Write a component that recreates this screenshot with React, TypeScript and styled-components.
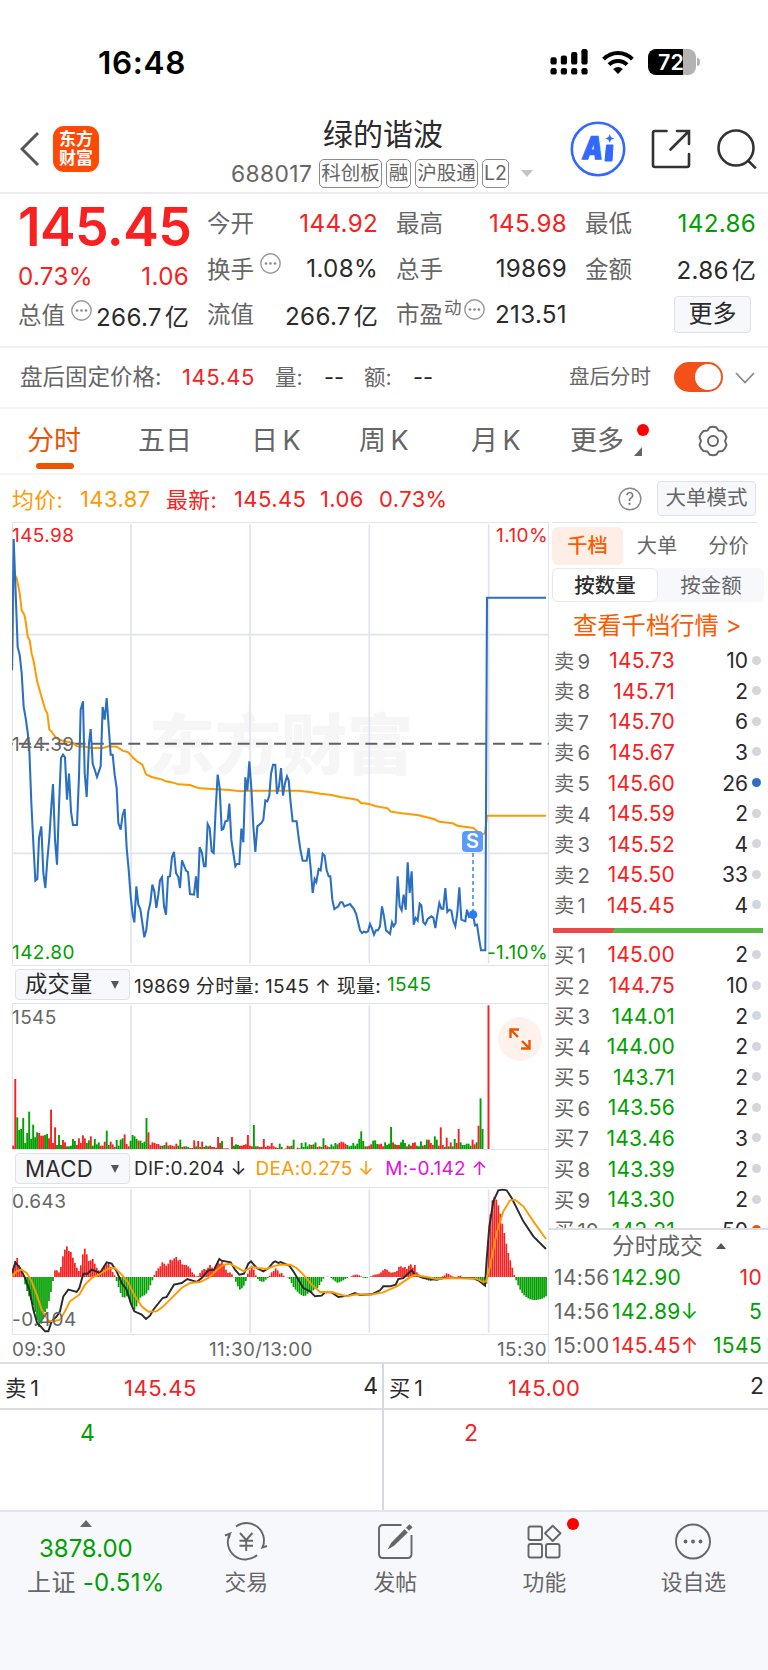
import type { ReactNode } from "react";
import styled, { createGlobalStyle } from "styled-components";

const color = {
    red: "#f82020",
    green: "#00a000",
    orange: "#ea5504",
    brand: "#ff5a00",
    average: "#ff9900",
    blue: "#2b70c0",
    magenta: "#e112e1",
    text: "#2b2b2b",
    sub: "#666666",
    line: "#e2e4ec",
    panel: "#f7f8fc",
};

const GlobalStyle = createGlobalStyle`
    * {
        box-sizing: border-box;
    }
    body {
        margin: 0;
        background: #fff;
        color: ${color.text};
        font-family: Inter, "Noto Sans CJK SC", sans-serif;
        white-space: nowrap;
    }
    svg {
        display: block;
        flex: none;
    }
`;

const Page = styled.div`
    width: 768px;
    height: 1670px;
    display: flex;
    flex-direction: column;
    overflow: hidden;
`;

/* ---------- status bar ---------- */

const StatusBar = styled.div`
    height: 106px;
    padding: 18px 67px 0 98px;
    display: flex;
    align-items: center;
    .time {
        flex: 1;
        color: #000;
        font-size: 31.5px;
        font-weight: 600;
        letter-spacing: 0.7px;
    }
    .icons {
        display: flex;
        align-items: center;
        gap: 14px;
    }
`;

const Battery = styled.div`
    position: relative;
    width: 48px;
    height: 26px;
    border-radius: 8px;
    background: linear-gradient(90deg, #000 72%, #b3b3b3 72%);
    color: #fff;
    font-size: 21.5px;
    font-weight: 600;
    line-height: 26px;
    padding-left: 10px;
    margin-right: 5px;
    &::after {
        content: "";
        position: absolute;
        right: -4px;
        top: 9px;
        width: 3px;
        height: 8px;
        border-radius: 0 3px 3px 0;
        background: #b3b3b3;
    }
`;

/* ---------- title bar ---------- */

const TitleBar = styled.header`
    height: 88px;
    padding: 0 10px 0 20px;
    display: flex;
    align-items: center;
    border-bottom: 2px solid #ececee;
`;

const Logo = styled.div`
    width: 46px;
    height: 46px;
    margin-left: 12px;
    border-radius: 11px;
    background: #ff4a06;
    color: #fff;
    font-size: 17px;
    font-weight: 700;
    line-height: 19px;
    text-align: center;
    padding-top: 4px;
`;

const TitleBlock = styled.div`
    flex: 1;
    display: flex;
    flex-direction: column;
    padding: 9px 0 0 132px;
    .name {
        width: 304px;
        text-align: center;
        font-size: 30px;
        line-height: 40px;
    }
    .code {
        display: flex;
        align-items: center;
        height: 40px;
        font-size: 22.8px;
        letter-spacing: 0.4px;
        color: ${color.sub};
    }
    .code b {
        font-weight: 400;
        width: 88px;
    }
`;

const Tag = styled.span<{ $width: number }>`
    width: ${({ $width }) => $width}px;
    height: 29px;
    margin-right: 4px;
    border: 1.5px solid #8a8a8a;
    border-radius: 5px;
    font-size: 19.5px;
    letter-spacing: 0;
    line-height: 26px;
    display: flex;
    justify-content: center;
`;

const Caret = styled.i<{ $size: number; $height: number; $color: string; $up?: boolean }>`
    width: 0;
    height: 0;
    border: ${({ $size }) => $size}px solid transparent;
    ${({ $height, $color, $up }) =>
        $up
            ? `border-top: 0; border-bottom: ${$height}px solid ${$color};`
            : `border-bottom: 0; border-top: ${$height}px solid ${$color};`}
`;

/* ---------- quote ---------- */

const Quote = styled.section`
    height: 154px;
    padding: 0 12px 0 18px;
    display: grid;
    grid-template-columns: repeat(4, 171px);
    gap: 18px;
    border-bottom: 2px solid #f0f0f2;
    font-size: 24.2px;
    letter-spacing: 0.3px;
`;

const QuoteColumn = styled.div`
    padding-top: 6px;
`;

const QuoteCell = styled.div<{ $color?: string; $height?: number }>`
    height: ${({ $height }) => $height ?? 45.6}px;
    display: flex;
    align-items: center;
    .label {
        color: ${color.sub};
        font-size: 23.5px;
        letter-spacing: 0;
        margin-top: -1px;
    }
    .sup {
        color: ${color.sub};
        font-size: 17.5px;
        letter-spacing: 0;
        margin: -14px 0 0 1px;
    }
    svg {
        margin: -9px 0 0 6px;
    }
    .sup + svg {
        margin-left: 2px;
    }
    .value {
        margin: 1px 0 0 auto;
        color: ${({ $color }) => $color ?? color.text};
    }
`;

const Unit = styled.span`
    margin-left: 3px;
    letter-spacing: 0;
`;

const Price = styled.div`
    height: 56px;
    margin-bottom: -4px;
    line-height: 54px;
    font-size: 53.5px;
    font-weight: 600;
    letter-spacing: -0.6px;
    color: ${color.red};
`;

const Change = styled.div`
    height: 49px;
    display: flex;
    align-items: center;
    justify-content: space-between;
    color: ${color.red};
`;

const OutlineButton = styled.button<{ $width: number; $height: number; $size: number }>`
    width: ${({ $width }) => $width}px;
    height: ${({ $height }) => $height}px;
    padding: 0;
    flex: none;
    border: 1.5px solid #dfe1e8;
    border-radius: 4px;
    background: ${color.panel};
    color: ${color.text};
    font-family: inherit;
    font-size: ${({ $size }) => $size}px;
    line-height: 1;
`;

/* ---------- after-hours line ---------- */

const AfterHours = styled.section`
    height: 61px;
    padding: 0 13px 0 20px;
    display: flex;
    align-items: center;
    border-bottom: 2px solid #f6f6f8;
    color: ${color.sub};
    font-size: 22px;
    span {
        line-height: 30px;
        margin-top: -1px;
    }
    .title {
        font-size: 22.5px;
        width: 162px;
    }
    .price {
        color: ${color.red};
        width: 93px;
        letter-spacing: 0.5px;
    }
    .key {
        width: 49px;
        font-size: 21.5px;
    }
    .dash {
        color: ${color.text};
        width: 40px;
    }
    .switch-label {
        margin-left: auto;
        margin-right: 23px;
        font-size: 20.5px;
    }
`;

const Toggle = styled.i`
    width: 49px;
    height: 30px;
    padding: 2px;
    border-radius: 15px;
    background: #f4511a;
    display: flex;
    justify-content: flex-end;
    margin: -1px 12px 0 0;
    &::after {
        content: "";
        width: 26px;
        height: 26px;
        border-radius: 50%;
        background: #fff;
    }
`;

/* ---------- period tabs ---------- */

const Tabs = styled.nav`
    height: 66px;
    padding-left: 27px;
    display: flex;
    align-items: center;
    border-bottom: 2px solid #f6f6f8;
    font-size: 27px;
    color: ${color.sub};
`;

const Tab = styled.div<{ $width: number; $active?: boolean }>`
    position: relative;
    width: ${({ $width }) => $width}px;
    line-height: 38px;
    margin-top: -1px;
    word-spacing: -3px;
    color: ${({ $active }) => ($active ? color.orange : color.sub)};
    ${({ $active }) =>
        $active &&
        `&::after {
            content: "";
            position: absolute;
            left: 9px;
            bottom: -9px;
            width: 38px;
            height: 6px;
            border-radius: 3px;
            background: ${color.orange};
        }`}
    .corner {
        position: absolute;
        left: 64px;
        bottom: 4px;
    }
`;

const Dot = styled.i<{ $left: number; $top: number }>`
    position: absolute;
    left: ${({ $left }) => $left}px;
    top: ${({ $top }) => $top}px;
    width: 12px;
    height: 12px;
    border-radius: 50%;
    background: #ff0000;
`;

const InfoRow = styled.div`
    height: 47px;
    padding: 0 12px;
    display: flex;
    align-items: center;
    font-size: 22px;
    letter-spacing: 0.4px;
    color: ${color.red};
    .average {
        color: ${color.average};
    }
    .key {
        width: 68px;
        font-size: 21.8px;
        margin-top: -1px;
    }
    .number {
        width: 86px;
    }
    .change {
        width: 59px;
    }
    svg {
        margin: 0 15px 0 auto;
    }
    button {
        color: ${color.sub};
        letter-spacing: 0;
    }
`;

/* ---------- charts ---------- */

const Main = styled.main`
    height: 842px;
    display: flex;
    border-bottom: 2px solid #dcdde4;
`;

const Charts = styled.div`
    width: 549px;
    padding-left: 12px;
    border-right: 1px solid ${color.line};
`;

const Panel = styled.div<{ $height: number }>`
    position: relative;
    height: ${({ $height }) => $height}px;
    border: solid ${color.line};
    border-width: 1.5px 0 1.5px 1px;
    svg {
        position: absolute;
        left: -1px;
        top: -1px;
    }
`;

const AxisLabel = styled.span<{ $top: number; $right?: boolean; $color?: string }>`
    position: absolute;
    top: ${({ $top }) => $top}px;
    ${({ $right }) => ($right ? "right: 0;" : "left: -1px;")}
    line-height: 24px;
    font-size: 19px;
    letter-spacing: 0.4px;
    color: ${({ $color }) => $color ?? color.sub};
`;

const Watermark = styled.div`
    position: absolute;
    left: 136px;
    top: 177px;
    line-height: 90px;
    font-size: 66px;
    font-weight: 900;
    color: #f6f6f7;
`;

const SellMark = styled.div`
    position: absolute;
    left: 449px;
    top: 308px;
    width: 21px;
    height: 21px;
    border-radius: 4px;
    background: #5c9cf8;
    color: #fff;
    text-align: center;
    font-size: 20px;
    font-weight: 600;
    line-height: 21px;
`;

const Expand = styled.div`
    position: absolute;
    left: 485px;
    top: 13px;
    width: 44px;
    height: 44px;
    border-radius: 50%;
    background: #fff2ec;
    svg {
        left: 11px;
        top: 11px;
    }
`;

const IndicatorRow = styled.div`
    height: 37px;
    padding-left: 3px;
    display: flex;
    align-items: center;
    font-size: 19px;
    letter-spacing: 0.28px;
    .text {
        margin-right: 6px;
    }
`;

const Select = styled.div`
    width: 115px;
    height: 31px;
    margin-right: 4px;
    padding: 0 10px 0 9px;
    display: flex;
    align-items: center;
    justify-content: space-between;
    border: 1.5px solid #dfe1e8;
    border-radius: 4px;
    background: ${color.panel};
    font-size: 22.2px;
    line-height: 24px;
    span {
        margin-top: -1px;
    }
`;

const TimeAxis = styled.div`
    height: 28px;
    padding: 1px 1px 0 0;
    display: flex;
    align-items: center;
    font-size: 18.8px;
    letter-spacing: 0.4px;
    color: ${color.sub};
    .open {
        width: 197px;
    }
    .close {
        margin-left: auto;
    }
`;

/* ---------- order book ---------- */

const Side = styled.aside`
    width: 219px;
    display: flex;
    flex-direction: column;
    padding-left: 3px;
`;

const SideTabs = styled.div`
    height: 46px;
    margin-right: 11px;
    border-top: 1.5px solid ${color.line};
    padding-top: 4px;
    display: flex;
    font-size: 20.3px;
    color: ${color.sub};
    line-height: 38px;
    text-align: center;
    span {
        width: 68px;
    }
    span:last-child {
        width: 75px;
        margin-right: -10px;
    }
    .active {
        width: 71px;
        border-radius: 6px;
        background: #ffeee6;
        color: ${color.brand};
        font-weight: 500;
        height: 38px;
    }
`;

const Segment = styled.div`
    height: 34px;
    margin-right: 4px;
    display: flex;
    border-radius: 6px;
    background: ${color.panel};
    font-size: 20.5px;
    line-height: 35px;
    color: ${color.sub};
    text-align: center;
    span {
        flex: 1;
    }
    .active {
        border: 1.5px solid #e8e9ee;
        border-radius: 6px;
        background: #fff;
        color: ${color.text};
        font-weight: 500;
        line-height: 33px;
        flex: none;
        width: 106px;
    }
`;

const MoreLink = styled.a`
    height: 43px;
    line-height: 46px;
    padding-left: 21px;
    font-size: 24.3px;
    color: ${color.brand};
`;

const Levels = styled.div<{ $height: number }>`
    height: ${({ $height }) => $height}px;
    overflow: hidden;
`;

const Level = styled.div<{ $color: string; $dot?: string }>`
    height: 30.6px;
    padding: 1px 7px 0 2px;
    display: flex;
    align-items: center;
    font-size: 21px;
    .side {
        width: 49px;
        margin-top: -2px;
        font-size: 20.3px;
        color: ${color.sub};
        word-spacing: -2.5px;
    }
    .price {
        width: 72px;
        text-align: right;
        letter-spacing: 0.2px;
        color: ${({ $color }) => $color};
    }
    .volume {
        flex: 1;
        text-align: right;
    }
    &::after {
        content: "";
        width: 9px;
        height: 9px;
        margin: -1px 0 0 4px;
        border-radius: 50%;
        background: ${({ $dot }) => $dot ?? "#d3d6dd"};
    }
`;

const Ratio = styled.div`
    height: 5px;
    margin: 8px 5px 6px 1px;
    background: linear-gradient(120deg, #ee4747 28.9%, #5ab946 29.1%);
`;

const Trades = styled.div`
    border-top: 2px solid #dcdde4;
    margin-left: -3px;
    padding: 0 6px 0 5px;
    h3 {
        margin: 0;
        height: 30px;
        padding: 1px 0 0 58px;
        display: flex;
        align-items: center;
        gap: 13px;
        font-size: 22.7px;
        line-height: 26px;
        font-weight: 400;
        color: ${color.sub};
    }
`;

const Trade = styled.div<{ $price: string; $volume: string }>`
    height: 33.9px;
    display: flex;
    align-items: center;
    font-size: 21px;
    letter-spacing: 0.35px;
    .time {
        width: 58px;
        color: ${color.sub};
    }
    .price {
        color: ${({ $price }) => $price};
    }
    .volume {
        margin-left: auto;
        color: ${({ $volume }) => $volume};
    }
`;

/* ---------- best bid / ask ---------- */

const Best = styled.section`
    height: 148px;
    display: grid;
    grid-template-columns: 384px 384px;
    border-bottom: 2px solid #e3e5ea;
`;

const BestSide = styled.div<{ $queue: string }>`
    border-right: 2px solid #d6d8e0;
    &:last-child {
        border-right: 0;
    }
    .head {
        height: 46px;
        padding: 4px 4px 0 5px;
        display: flex;
        align-items: center;
        border-bottom: 2px solid #dcdde4;
        font-size: 22px;
        line-height: 28px;
    }
    .side {
        width: 119px;
        font-size: 21.3px;
        word-spacing: -2px;
    }
    .price {
        flex: 1;
        letter-spacing: 0.5px;
        color: ${color.red};
    }
    .volume {
        margin-top: -5px;
        font-size: 23px;
    }
    .queue {
        padding: 8px 0 0 80px;
        font-size: 23px;
        line-height: 30px;
        color: ${({ $queue }) => $queue};
    }
`;

/* ---------- bottom navigation ---------- */

const BottomNav = styled.footer`
    flex: 1;
    display: flex;
    background: ${color.panel};
    color: ${color.sub};
`;

const IndexBox = styled.div`
    width: 172px;
    padding-top: 8px;
    display: flex;
    flex-direction: column;
    align-items: center;
    font-size: 24px;
    line-height: 34px;
    .value {
        margin-top: 5px;
        color: ${color.green};
    }
    .row {
        padding-left: 20px;
        letter-spacing: 0.3px;
    }
    .percent {
        color: ${color.green};
    }
`;

const NavItem = styled.div`
    position: relative;
    width: 149.3px;
    padding-top: 9px;
    display: flex;
    flex-direction: column;
    align-items: center;
    font-size: 21.8px;
    line-height: 34px;
    svg {
        margin-bottom: 4px;
    }
`;

/* ---------- data ---------- */

// chart coordinates: three units per pixel
const priceLine =
    "36,482 41,88 47,250 53,412 59,435 65,490 71,592 77,625 83,668 88,720 94,880 100,1000 106,1113 112,1108 117,985 124,950 130,1090 136,1135 142,1050 148,985 154,890 159,823 165,990 171,1065 177,890 183,745 189,735 195,743 201,870 207,792 213,905 219,946 231,946 237,800 242,600 249,575 254,790 260,862 267,700 272,658 278,762 284,780 291,802 302,770 308,592 314,630 320,565 326,650 332,735 338,735 344,795 350,835 355,940 362,960 368,915 374,898 380,1015 386,1080 392,1160 398,1215 403,1238 409,1130 415,1185 421,1198 427,1240 433,1283 439,1260 445,1205 451,1180 457,1125 463,1145 469,1195 475,1155 480,1112 486,1102 492,1190 498,1215 504,1102 510,1100 516,1042 522,1027 528,1090 535,1102 540,1135 546,1052 558,1083 564,1087 570,1153 582,1155 588,1100 593,1165 599,1012 606,1030 612,1070 617,1070 623,943 629,955 635,1025 641,1030 647,900 653,795 659,835 665,960 670,958 676,935 683,933 688,882 694,990 700,1030 706,1070 711,1063 718,1063 724,957 730,998 736,803 742,843 748,755 754,835 760,950 766,1027 772,950 784,940 790,930 796,872 802,875 808,858 813,793 819,765 826,765 831,852 837,830 843,775 849,858 855,820 861,800 866,812 872,880 878,935 890,935 896,985 902,1025 908,1053 920,1053 926,1015 932,1075 938,1150 944,1108 949,1117 956,1078 962,1082 968,1032 974,1038 980,1082 986,1100 991,1100 997,1170 1003,1198 1015,1190 1021,1178 1027,1178 1033,1190 1050,1183 1062,1198 1069,1215 1080,1262 1086,1270 1092,1266 1098,1268 1104,1265 1110,1243 1116,1256 1122,1275 1128,1262 1134,1262 1140,1250 1146,1190 1152,1220 1158,1262 1170,1273 1176,1238 1181,1250 1187,1240 1193,1100 1199,1190 1205,1202 1211,1155 1217,1200 1223,1058 1229,1150 1235,1085 1241,1245 1247,1225 1253,1233 1259,1182 1264,1187 1270,1238 1276,1244 1283,1228 1294,1220 1300,1224 1306,1255 1312,1215 1318,1180 1324,1197 1330,1197 1336,1135 1342,1207 1348,1200 1354,1203 1360,1235 1366,1250 1372,1210 1378,1133 1384,1230 1396,1235 1401,1200 1407,1222 1419,1215 1425,1247 1431,1245 1437,1285 1443,1322 1456,1322 1461,264 1638,264";

const averageLine =
    "36,482 41,190 50,205 59,250 65,302 73,315 77,335 83,380 89,392 95,432 101,455 112,518 118,538 130,580 136,600 142,612 148,660 154,665 165,680 175,690 219,700 231,710 255,711 275,715 310,715 325,710 350,711 368,723 385,728 400,745 410,754 427,765 438,794 455,802 470,806 485,809 498,815 520,819 535,824 570,826 598,836 690,841 720,845 750,843 895,843 935,848 960,852 990,855 1025,863 1055,867 1073,871 1083,880 1108,883 1125,889 1163,896 1172,906 1205,911 1256,917 1302,928 1318,936 1358,941 1372,948 1420,955 1432,965 1445,973 1455,972 1461,918 1638,918";

const difLine =
    "36,940 46,908 60,925 75,955 88,990 100,1050 112,1092 120,1098 135,1115 145,1115 155,1085 170,1070 180,1055 190,1010 205,990 230,997 238,985 250,942 262,942 275,930 300,940 320,908 335,912 350,935 365,970 380,990 392,1030 403,1055 425,1065 438,1078 450,1068 460,1050 488,1015 500,1012 522,975 545,970 562,958 590,967 605,955 625,932 642,930 658,898 665,903 692,908 705,930 718,945 732,942 745,912 753,905 770,925 790,935 805,926 820,908 826,905 835,910 842,907 868,918 880,935 895,960 910,985 930,995 945,1010 965,1008 975,998 995,998 1015,1012 1045,1008 1065,1000 1080,1006 1115,1004 1140,992 1150,980 1170,980 1187,975 1195,958 1210,955 1235,932 1245,945 1270,955 1310,960 1330,955 1370,955 1390,955 1420,956 1435,962 1455,978 1460,900 1468,800 1480,725 1495,692 1508,690 1520,692 1535,715 1570,785 1600,830 1638,868";

const deaLine =
    "36,950 50,935 65,930 80,940 95,965 110,1005 125,1050 145,1083 160,1085 180,1080 195,1055 210,1025 238,1005 255,975 275,955 300,943 325,927 345,925 365,945 385,970 405,1010 425,1040 445,1056 470,1055 490,1040 520,1010 545,985 570,970 600,967 625,955 650,932 670,916 690,912 710,923 732,935 755,922 775,925 800,928 820,920 840,915 870,915 890,925 910,945 935,975 960,997 995,997 1015,1003 1040,1010 1070,1004 1110,1005 1150,998 1190,980 1230,953 1245,946 1280,952 1310,958 1350,955 1430,957 1450,967 1458,965 1470,920 1490,820 1510,755 1530,722 1545,720 1570,740 1600,785 1638,838";

// minute volumes, negative when the minute closed down
const volumes = [
    10, 210, -95, -57, -60, -93, -18, -48, -112, -30, -73, -35, -50, 48, 40, 40, -42, -45, 32, 118, 18, 65, -12, -42,
    -12, 27, 20, -8, -8, -10, -30, -24, 12, 32, 18, 41, 32, -18, -26, 38, -10, -30, -14, -20, 10, 10, 22, -55, -12, 22,
    14, 6, -27, -10, -28, -32, 44, 15, 8, -25, -42, -38, -30, 25, -25, -18, -22, -93, 50, 12, 20, 18, 15, 15, 10, -10,
    -12, 20, -10, 12, 10, 8, 16, -10, -28, 6, 8, -8, -6, 3, 3, 26, -8, 24, -6, 22, 6, -10, -8, 10, 6, 6, -4, 36, 18,
    -24, 2, 2, 2, 0, 36, -10, -14, -12, 10, 10, 12, 14, 42, 10, 8, -72, -8, 8, 6, 6, 30, 6, 10, 8, 18, 8, 5, 3, -16,
    -6, 0, -2, 10, -8, 10, -28, 0, 4, 2, -18, -6, -20, -8, -14, 12, -14, -20, 6, 8, -6, -32, 12, 8, -6, -14, -8, -18,
    -14, 18, 22, 20, 16, -12, -8, -10, -18, -10, -16, -30, -53, -24, 8, -8, 10, 14, -25, -26, -15, 14, 16, 8, -20, -12,
    -16, -66, 20, -14, 12, 12, -20, -28, -18, 8, -14, 10, 18, 20, -10, -8, -23, 10, -12, -28, 28, 18, 12, -38, -28, 10,
    65, 12, -6, 34, -8, 20, -8, -30, 18, 60, -20, -12, -12, -16, -16, -10, 28, 14, -20, 70, -152, -60, 0, 0, 431,
];

const macd = [
    25, 48, 57, 35, 20, 5, -22, -42, -58, -68, -85, -105, -130, -150, -140, -125, -105, -95, -72, -45, -12, 20, 20, 14,
    30, 62, 82, 92, 78, 75, 58, 42, 28, 18, 35, 68, 85, 68, 48, 50, 54, 40, 28, 20, 12, 25, 35, 38, 42, 30, 15, 5, -12,
    -30, -48, -60, -62, -58, -60, -75, -85, -98, -88, -75, -62, -58, -55, -50, -40, -25, -10, 6, 18, 26, 32, 44, 40, 34,
    40, 52, 50, 56, 60, 50, 52, 38, 36, 36, 32, 26, 14, 8, 2, 3, 12, 20, 24, 22, 28, 36, 28, 24, 32, 42, 40, 48, 34, 22,
    12, 14, 8, -1, -14, -28, -38, -34, -26, -12, 10, 20, 34, 22, 5, -6, -12, -14, -14, -8, -3, 4, 14, 18, 26, 20, 10, 12,
    4, 0, -1, -6, -18, -30, -38, -44, -50, -54, -57, -56, -50, -46, -48, -40, -36, -34, -24, -14, -5, 0, 1, 0, -3, -8,
    -13, -17, -16, -13, -10, -6, -3, 0, 2, 5, 7, 7, 5, 2, -2, -3, -2, 0, 2, 5, 7, 8, 10, 14, 20, 24, 22, 16, 13, 14, 15,
    18, 30, 32, 28, 30, 24, 34, 38, 28, 36, 14, 8, 2, 2, -3, -8, -11, -12, -10, -6, -3, -3, -2, 2, 5, 11, 9, 5, 2, -2,
    -2, 3, 4, 0, -3, -2, -2, -2, -2, -3, -6, -10, -14, -18, -22, -20, 108, 188, 230, 240, 232, 215, 190, 160, 132, 100,
    72, 50, 28, 6, -10, -25, -38, -48, -55, -60, -64, -67, -68, -69, -69, -68, -67, -65, -62, -58,
];

const asks: [string, string, string][] = [
    ["9", "145.73", "10"],
    ["8", "145.71", "2"],
    ["7", "145.70", "6"],
    ["6", "145.67", "3"],
    ["5", "145.60", "26"],
    ["4", "145.59", "2"],
    ["3", "145.52", "4"],
    ["2", "145.50", "33"],
    ["1", "145.45", "4"],
];

const bids: [string, string, string][] = [
    ["1", "145.00", "2"],
    ["2", "144.75", "10"],
    ["3", "144.01", "2"],
    ["4", "144.00", "2"],
    ["5", "143.71", "2"],
    ["6", "143.56", "2"],
    ["7", "143.46", "3"],
    ["8", "143.39", "2"],
    ["9", "143.30", "2"],
    ["10", "143.21", "50"],
];

/* ---------- icons ---------- */

const SignalIcon = () => (
    <svg width="38" height="26" viewBox="0 0 38 26">
        {[8.3, 6.5, 3, 0].map((top, i) => (
            <g key={top}>
                <rect x={0.5 + i * 10.3} y={top} width="6.2" height={15.6 - top} rx="2.2" />
                <rect x={0.5 + i * 10.3} y="19" width="6.2" height="6.6" rx="2.2" />
            </g>
        ))}
    </svg>
);

const WifiIcon = () => (
    <svg width="32" height="24" viewBox="0 0 32 24" fill="none" stroke="#000" strokeWidth="4">
        <path d="M1.6 9.2C9.6 1 22.4 1 30.4 9.2" />
        <path d="M7 14.7C12 9.6 20 9.6 25 14.7" />
        <path d="M11.2 19C14 16.3 18 16.3 20.8 19L16 24Z" fill="#000" stroke="none" />
    </svg>
);

const MoreCircle = () => (
    <svg width="21" height="21" viewBox="0 0 21 21">
        <circle cx="10.5" cy="10.5" r="9.7" fill="none" stroke="#999" strokeWidth="1.4" />
        {[6, 10.5, 15].map((x) => (
            <circle key={x} cx={x} cy="10.5" r="1.3" fill="#888" />
        ))}
    </svg>
);

const AiIcon = () => (
    <svg width="56" height="56" viewBox="0 0 56 56">
        <circle cx="28" cy="28" r="26.2" fill="#fff" stroke="#3268ff" strokeWidth="2.6" />
        <text
            x="11.5"
            y="38"
            fontSize="31"
            fontWeight="900"
            textLength="20"
            lengthAdjust="spacingAndGlyphs"
            transform="translate(5.3 0) skewX(-8)"
            fill="#3268ff"
            stroke="#3268ff"
            strokeWidth="1.4"
        >
            A
        </text>
        <path d="M36.5 24H43L42 40H35Z" fill="#3268ff" stroke="#3268ff" strokeLinejoin="round" />
        <path d="M39.7 13L41 16.2L44.2 17.5L41 18.8L39.7 22L38.4 18.8L35.2 17.5L38.4 16.2Z" fill="#3268ff" />
    </svg>
);

const ShareIcon = () => (
    <svg width="40" height="40" viewBox="0 0 40 40" fill="none" stroke="#333" strokeWidth="2.6" strokeLinecap="round">
        <path d="M15.5 2H4Q2 2 2 4V36Q2 38 4 38H36Q38 38 38 36V25" />
        <path d="M26 2H38V15M37.5 2.5L19.5 20.5" />
    </svg>
);

const SearchIcon = () => (
    <svg width="42" height="42" viewBox="0 0 42 42" fill="none" stroke="#333" strokeWidth="2.6">
        <circle cx="20" cy="20" r="17.5" />
        <path d="M32 32.5L39.8 40.3" />
    </svg>
);

const GearIcon = () => (
    <svg width="32" height="32" viewBox="0 0 32 32" fill="none" stroke="#666" strokeWidth="2">
        <path
            strokeLinejoin="round"
            d="M12.5 2.5Q16 1 19.5 2.5L21.5 5.5L25.5 6Q28.5 8.5 29.5 12L28 16L29.5 20Q28.5 23.5 25.5 26L21.5 26.5L19.5 29.5Q16 31 12.5 29.5L10.5 26.5L6.5 26Q3.5 23.5 2.5 20L4 16L2.5 12Q3.5 8.5 6.5 6L10.5 5.5Z"
        />
        <circle cx="16" cy="16" r="5" />
    </svg>
);

const HelpIcon = () => (
    <svg width="24" height="24" viewBox="0 0 24 24">
        <circle cx="12" cy="12" r="10.8" fill="none" stroke="#888" strokeWidth="1.4" />
        <text x="12" y="18" textAnchor="middle" fontSize="17" fill="#777">
            ?
        </text>
    </svg>
);

const TradeIcon = () => (
    <svg width="44" height="40" viewBox="0 0 44 40" fill="none" stroke="#666" strokeWidth="1.9">
        <path d="M12 5.5A17.5 17.5 0 0 1 38.5 26.5L43 25M38.5 26.5L40 22" />
        <path d="M33 34A17.5 17.5 0 0 1 6 12.5L1 14.5M6 12.5L5 17" />
        <path d="M16 12L22.2 19L28.4 12M22.2 19V30M15.5 19.8H29M15.5 24.8H29" />
    </svg>
);

const PostIcon = () => (
    <svg width="36" height="40" viewBox="0 0 36 40" fill="none" stroke="#666" strokeWidth="1.9">
        <path d="M24.5 4H6Q2 4 2 8V33Q2 37 6 37H30.5Q34.5 37 34.5 33V14" />
        <path d="M27.5 9.5L29.5 11.5L16.5 24L13 26L14.8 22.5Z" fill="#666" />
        <path d="M30.5 8.3L34 4.8" strokeWidth="4.4" />
    </svg>
);

const FeatureIcon = () => (
    <svg width="36" height="40" viewBox="0 0 36 40" fill="none" stroke="#666" strokeWidth="1.9">
        <rect x="2.5" y="5.5" width="13.5" height="13.5" rx="2" />
        <rect x="2.5" y="23" width="13.5" height="13.5" rx="2" />
        <rect x="20" y="23" width="13.5" height="13.5" rx="2" />
        <path d="M26.7 4.8L34.5 12.3L26.7 20L19 12.3Z" strokeLinejoin="round" />
    </svg>
);

const WatchIcon = () => (
    <svg width="38" height="40" viewBox="0 0 38 40">
        <circle cx="19" cy="20.5" r="17" fill="none" stroke="#666" strokeWidth="1.9" />
        {[11.5, 19, 26.5].map((x) => (
            <circle key={x} cx={x} cy="20.5" r="1.9" fill="#666" />
        ))}
    </svg>
);

/* ---------- chart pieces ---------- */

const gridX = [393, 750, 1108, 1466];

const GridLines = ({ top, bottom }: { top: number; bottom: number }) => (
    <g stroke={color.line} strokeWidth="5">
        {gridX.map((x) => (
            <path key={x} d={`M${x} ${top}V${bottom}`} />
        ))}
    </g>
);

interface BarsProps {
    values: number[];
    zero: number;
    width: number;
    // all bars stand on the zero line, the sign only picks the colour
    upright?: boolean;
}

const Bars = ({ values, zero, width, upright }: BarsProps) => (
    <g>
        {values.map((v, i) => (
            <rect
                key={i}
                x={37 + i * 5.965}
                y={upright || v > 0 ? zero - Math.abs(v) : zero}
                width={width}
                height={Math.abs(v)}
                fill={v > 0 ? color.red : color.green}
            />
        ))}
    </g>
);

interface CellProps {
    label: string;
    value: ReactNode;
    valueColor?: string;
    sup?: string;
    hint?: boolean;
    height?: number;
}

const Cell = ({ label, value, valueColor, sup, hint, height }: CellProps) => (
    <QuoteCell $color={valueColor} $height={height}>
        <span className="label">{label}</span>
        {sup && <span className="sup">{sup}</span>}
        {hint && <MoreCircle />}
        <span className="value">{value}</span>
    </QuoteCell>
);

const Amount = ({ value }: { value: string }) => (
    <>
        {value}
        <Unit>亿</Unit>
    </>
);

const App = () => {
    return (
        <Page>
            <GlobalStyle />
            <StatusBar>
                <span className="time">16:48</span>
                <div className="icons">
                    <SignalIcon />
                    <WifiIcon />
                    <Battery>72</Battery>
                </div>
            </StatusBar>

            <TitleBar>
                <svg width="21" height="36" viewBox="0 0 21 36" fill="none" stroke="#555" strokeWidth="3">
                    <path d="M18 2L2 18L18 34" />
                </svg>
                <Logo>
                    东方
                    <br />
                    财富
                </Logo>
                <TitleBlock>
                    <div className="name">绿的谐波</div>
                    <div className="code">
                        <b>688017</b>
                        <Tag $width={63}>科创板</Tag>
                        <Tag $width={25}>融</Tag>
                        <Tag $width={63}>沪股通</Tag>
                        <Tag $width={27}>L2</Tag>
                        <Caret $size={6.5} $height={7.5} $color="#c4c4c4" style={{ marginLeft: 8 }} />
                    </div>
                </TitleBlock>
                <AiIcon />
                <svg width="25" height="1" />
                <ShareIcon />
                <svg width="25" height="1" />
                <SearchIcon />
            </TitleBar>

            <Quote>
                <QuoteColumn>
                    <Price>145.45</Price>
                    <Change>
                        <span>0.73%</span>
                        <span>1.06</span>
                    </Change>
                    <Cell label="总值" hint value={<Amount value="266.7" />} height={27} />
                </QuoteColumn>
                <QuoteColumn>
                    <Cell label="今开" value="144.92" valueColor={color.red} />
                    <Cell label="换手" hint value="1.08%" />
                    <Cell label="流值" value={<Amount value="266.7" />} />
                </QuoteColumn>
                <QuoteColumn>
                    <Cell label="最高" value="145.98" valueColor={color.red} />
                    <Cell label="总手" value="19869" />
                    <Cell label="市盈" sup="动" hint value="213.51" />
                </QuoteColumn>
                <QuoteColumn>
                    <Cell label="最低" value="142.86" valueColor={color.green} />
                    <Cell label="金额" value={<Amount value="2.86" />} />
                    <Cell
                        label=""
                        value={
                            <OutlineButton $width={77} $height={37} $size={24} style={{ marginRight: 5 }}>
                                更多
                            </OutlineButton>
                        }
                    />
                </QuoteColumn>
            </Quote>

            <AfterHours>
                <span className="title">盘后固定价格:</span>
                <span className="price">145.45</span>
                <span className="key">量:</span>
                <span className="dash">--</span>
                <span className="key">额:</span>
                <span className="dash">--</span>
                <span className="switch-label">盘后分时</span>
                <Toggle />
                <svg width="20" height="12" viewBox="0 0 20 12" fill="none" stroke="#888" strokeWidth="1.8">
                    <path d="M1 1L10 10.5L19 1" />
                </svg>
            </AfterHours>

            <Tabs>
                <Tab $width={111} $active>
                    分时
                </Tab>
                <Tab $width={113}>五日</Tab>
                <Tab $width={108}>日 K</Tab>
                <Tab $width={112}>周 K</Tab>
                <Tab $width={99}>月 K</Tab>
                <Tab $width={127}>
                    更多
                    <Dot $left={67} $top={2} />
                    <svg className="corner" width="8" height="9" viewBox="0 0 8 9">
                        <path d="M8 0V9H0Z" fill="#666" />
                    </svg>
                </Tab>
                <GearIcon />
            </Tabs>

            <InfoRow>
                <span className="average key">均价:</span>
                <span className="average number">143.87</span>
                <span className="key">最新:</span>
                <span className="number">145.45</span>
                <span className="change">1.06</span>
                <span>0.73%</span>
                <HelpIcon />
                <OutlineButton $width={99} $height={35} $size={20.5}>
                    大单模式
                </OutlineButton>
            </InfoRow>

            <Main>
                <Charts>
                    <Panel $height={444}>
                        <Watermark>东方财富</Watermark>
                        <svg width="537" height="444" viewBox="36 37 1611 1332" fill="none">
                            <GridLines top={44} bottom={1361} />
                            <path d="M36 375H1646M36 1031H1646" stroke={color.line} strokeWidth="5" />
                            <path
                                d="M36 702H1646"
                                stroke="#606060"
                                strokeWidth="6"
                                strokeDasharray="36 18.7"
                                strokeDashoffset="34"
                            />
                            <polyline points={averageLine} stroke={color.average} strokeWidth="6" />
                            <polyline points={priceLine} stroke={color.blue} strokeWidth="6.2" />
                            <path d="M1419 1030V1205" stroke="#4a90f8" strokeWidth="5" strokeDasharray="12 9" />
                            <circle cx="1419" cy="1215" r="13" fill="#2a7cf4" />
                        </svg>
                        <SellMark>S</SellMark>
                        <AxisLabel $top={1} $color={color.red}>
                            145.98
                        </AxisLabel>
                        <AxisLabel $top={1} $right $color={color.red}>
                            1.10%
                        </AxisLabel>
                        <AxisLabel $top={210}>144.39</AxisLabel>
                        <AxisLabel $top={418} $color={color.green}>
                            142.80
                        </AxisLabel>
                        <AxisLabel $top={418} $right $color={color.green}>
                            -1.10%
                        </AxisLabel>
                    </Panel>
                    <IndicatorRow>
                        <Select>
                            <span>成交量</span>
                            <Caret $size={4.7} $height={8} $color="#555" />
                        </Select>
                        <span className="text">19869 分时量: 1545 ↑ 现量:</span>
                        <span style={{ color: color.green }}>1545</span>
                    </IndicatorRow>
                    <Panel $height={147}>
                        <svg width="537" height="147" viewBox="36 129 1611 441">
                            <GridLines top={136} bottom={567} />
                            <Bars values={volumes} zero={567} width={5.7} upright />
                        </svg>
                        <AxisLabel $top={2}>1545</AxisLabel>
                        <Expand>
                            <svg width="22" height="22" viewBox="0 0 22 22" fill="none" stroke={color.orange} strokeWidth="2.4">
                                <path d="M1.5 10V1.5H10M1.5 1.5L9 9" />
                                <path d="M20.5 12V20.5H12M20.5 20.5L13 13" />
                            </svg>
                        </Expand>
                    </Panel>
                    <IndicatorRow>
                        <Select>
                            MACD
                            <Caret $size={4.7} $height={8} $color="#555" />
                        </Select>
                        <span className="text">DIF:0.204 ↓</span>
                        <span className="text" style={{ color: color.average, marginLeft: 3 }}>
                            DEA:0.275 ↓
                        </span>
                        <span style={{ color: color.magenta, marginLeft: 5 }}>M:-0.142 ↑</span>
                    </IndicatorRow>
                    <Panel $height={148}>
                        <svg width="537" height="148" viewBox="36 682 1611 444" fill="none">
                            <GridLines top={689} bottom={1119} />
                            <Bars values={macd} zero={952} width={5.2} />
                            <polyline points={difLine} stroke={color.text} strokeWidth="5.8" />
                            <polyline points={deaLine} stroke={color.average} strokeWidth="5.8" />
                        </svg>
                        <AxisLabel $top={2}>0.643</AxisLabel>
                        <AxisLabel $top={120}>-0.404</AxisLabel>
                    </Panel>
                    <TimeAxis>
                        <span className="open">09:30</span>
                        <span>11:30/13:00</span>
                        <span className="close">15:30</span>
                    </TimeAxis>
                </Charts>

                <Side>
                    <SideTabs>
                        <span className="active">千档</span>
                        <span>大单</span>
                        <span>分价</span>
                    </SideTabs>
                    <Segment>
                        <span className="active">按数量</span>
                        <span>按金额</span>
                    </Segment>
                    <MoreLink>查看千档行情 &gt;</MoreLink>
                    <Levels $height={276}>
                        {asks.map(([level, price, volume]) => (
                            <Level key={level} $color={color.red} $dot={level === "5" ? color.blue : undefined}>
                                <span className="side">卖 {level}</span>
                                <span className="price">{price}</span>
                                <span className="volume">{volume}</span>
                            </Level>
                        ))}
                    </Levels>
                    <Ratio />
                    <Levels $height={290}>
                        {bids.map(([level, price, volume], i) => (
                            <Level
                                key={level}
                                $color={i < 2 ? color.red : color.green}
                                $dot={level === "10" ? color.orange : undefined}
                            >
                                <span className="side">买 {level}</span>
                                <span className="price">{price}</span>
                                <span className="volume">{volume}</span>
                            </Level>
                        ))}
                    </Levels>
                    <Trades>
                        <h3>
                            分时成交
                            <Caret $size={5.2} $height={6.5} $color="#555" $up />
                        </h3>
                        <Trade $price={color.green} $volume={color.red}>
                            <span className="time">14:56</span>
                            <span className="price">142.90</span>
                            <span className="volume">10</span>
                        </Trade>
                        <Trade $price={color.green} $volume={color.green}>
                            <span className="time">14:56</span>
                            <span className="price">142.89↓</span>
                            <span className="volume">5</span>
                        </Trade>
                        <Trade $price={color.red} $volume={color.green}>
                            <span className="time">15:00</span>
                            <span className="price">145.45↑</span>
                            <span className="volume">1545</span>
                        </Trade>
                    </Trades>
                </Side>
            </Main>

            <Best>
                <BestSide $queue={color.green}>
                    <div className="head">
                        <span className="side">卖 1</span>
                        <span className="price">145.45</span>
                        <span className="volume">4</span>
                    </div>
                    <div className="queue">4</div>
                </BestSide>
                <BestSide $queue={color.red}>
                    <div className="head">
                        <span className="side">买 1</span>
                        <span className="price">145.00</span>
                        <span className="volume">2</span>
                    </div>
                    <div className="queue">2</div>
                </BestSide>
            </Best>

            <BottomNav>
                <IndexBox>
                    <Caret $size={6.5} $height={7} $color="#666" $up />
                    <span className="value">3878.00</span>
                    <span className="row">
                        上证 <span className="percent">-0.51%</span>
                    </span>
                </IndexBox>
                <NavItem>
                    <TradeIcon />
                    交易
                </NavItem>
                <NavItem>
                    <PostIcon />
                    发帖
                </NavItem>
                <NavItem>
                    <FeatureIcon />
                    <Dot $left={97} $top={6} />
                    功能
                </NavItem>
                <NavItem>
                    <WatchIcon />
                    设自选
                </NavItem>
            </BottomNav>
        </Page>
    );
};

export default App;
